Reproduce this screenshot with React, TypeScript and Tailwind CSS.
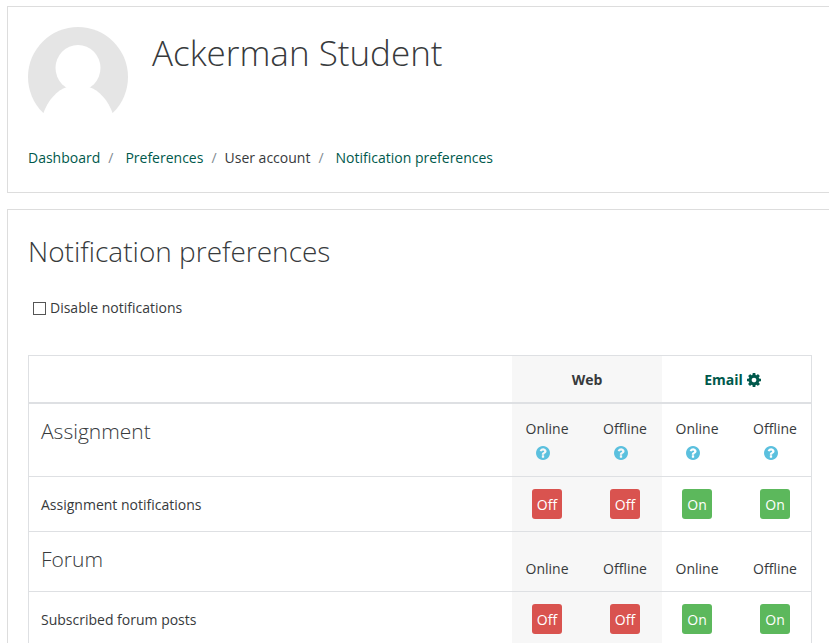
import { useState } from "react";

type Section = { title: string; item: string; help: boolean };

const sections: Section[] = [
  { title: "Assignment", item: "Assignment notifications", help: true },
  { title: "Forum", item: "Subscribed forum posts", help: false },
];

function CogIcon() {
  return (
    <svg viewBox="128 128 1536 1536" className="h-3.5 w-3.5" fill="currentColor" aria-hidden="true">
      <path d="M1152 896q0-106-75-181t-181-75-181 75-75 181 75 181 181 75 181-75 75-181zm512-109v222q0 12-8 23t-20 13l-185 28q-19 54-39 91 35 50 107 138 10 12 10 25t-9 23q-27 37-99 108t-94 71q-12 0-26-9l-138-108q-44 23-91 38-16 136-29 186-7 28-36 28h-222q-14 0-24.500-8.500t-11.500-21.500l-28-184q-49-16-90-37l-141 107q-10 9-25 9-14 0-25-11-126-114-165-168-7-10-7-23 0-12 8-23 15-21 51-66.500t54-70.500q-27-50-41-99l-183-27q-13-2-21-12.500t-8-23.500v-222q0-12 8-23t19-13l186-28q14-46 39-92-40-57-107-138-10-12-10-24 0-10 9-23 26-36 98.500-107.500t94.500-71.500q13 0 26 10l138 107q44-23 91-38 16-136 29-186 7-28 36-28h222q14 0 24.500 8.500t11.500 21.500l28 184q49 16 90 37l142-107q9-9 24-9 13 0 25 10 129 119 165 170 7 8 7 22 0 12-8 23-15 21-51 66.500t-54 70.500q26 50 41 98l183 28q13 2 21 12.500t8 23.500z" />
    </svg>
  );
}

function HelpIcon() {
  return (
    <svg viewBox="128 128 1536 1536" className="h-3.5 w-3.5" fill="currentColor" aria-hidden="true">
      <path d="M1024 1376v-192q0-14-9-23t-23-9h-192q-14 0-23 9t-9 23v192q0 14 9 23t23 9h192q14 0 23-9t9-23zm256-672q0-88-55.500-163t-138.500-116-170-41q-243 0-371 213-15 24 8 42l132 100q7 6 19 6 16 0 25-12 53-68 86-92 34-24 86-24 48 0 85.500 26t37.500 59q0 38-20 61t-68 45q-63 28-115.500 86.500t-52.500 125.500v36q0 14 9 23t23 9h192q14 0 23-9t9-23q0-19 21.500-49.500t54.500-49.500q32-18 49-28.500t46-35 44.500-48 28-60.500 12.500-81zm384 192q0 209-103 385.500t-279.500 279.500-385.500 103-385.500-103-279.500-279.500-103-385.500 103-385.500 279.500-279.500 385.500-103 385.500 103 279.500 279.500 103 385.500z" />
    </svg>
  );
}

function Avatar() {
  return (
    <svg viewBox="0 0 100 100" className="h-[100px] w-[100px] shrink-0" role="img" aria-label="Ackerman Student">
      <circle cx="50" cy="50" r="50" fill="#e5e5e5" />
      <ellipse cx="50" cy="41" rx="22.500" ry="23" fill="#fff" />
      <path d="M15 87C20 73 29 63 39 60H61C71 63 80 73 85 87L88 100H12Z" fill="#fff" />
    </svg>
  );
}

function StateLabels({ help }: { help: boolean }) {
  return (
    <div className="flex gap-[34px] pl-[13px]">
      {["Online", "Offline"].map((name) => (
        <div key={name} className="flex w-11 flex-col items-center">
          <span>{name}</span>
          {help && (
            <button type="button" aria-label={`Help with ${name}`} className="mr-2 flex h-6 items-center text-[#5bc0de]">
              <HelpIcon />
            </button>
          )}
        </div>
      ))}
    </div>
  );
}

function Toggle({ initial, label }: { initial: boolean; label: string }) {
  const [on, setOn] = useState(initial);
  return (
    <div className="flex w-11 justify-center">
      <button
        type="button"
        aria-label={`${label}: ${on ? "On" : "Off"}`}
        aria-pressed={on}
        onClick={() => setOn(!on)}
        className={`flex h-[30px] w-[30px] items-center justify-center rounded-[3px] pt-0.5 text-white ${on ? "bg-[#5cb85c]" : "bg-[#d9534f]"}`}
      >
        {on ? "On" : "Off"}
      </button>
    </div>
  );
}

function TogglePair({ initial, label }: { initial: boolean; label: string }) {
  return (
    <div className="flex gap-[34px] pl-[13px]">
      <Toggle initial={initial} label={`${label} online`} />
      <Toggle initial={initial} label={`${label} offline`} />
    </div>
  );
}

function SectionRows({ title, item, help }: Section) {
  return (
    <>
      <tr className={help ? "h-[73px]" : "h-[60px]"}>
        <th scope="rowgroup" className="border-b border-l border-[#dee0e3] px-3 pt-[11px] text-left align-top text-[21px] leading-8 font-light">
          {title}
        </th>
        <td className={`border-b border-[#dee0e3] bg-[#f7f7f7] align-bottom ${help ? "pb-[11px]" : "pb-[10px]"}`}>
          <StateLabels help={help} />
        </td>
        <td className={`border-r border-b border-[#dee0e3] align-bottom ${help ? "pb-[11px]" : "pb-[10px]"}`}>
          <StateLabels help={help} />
        </td>
      </tr>
      <tr className="h-[55px]">
        <th scope="row" className="border-b border-l border-[#dee0e3] px-3 pt-0.5 text-left font-normal">
          {item}
        </th>
        <td className="border-b border-[#dee0e3] bg-[#f7f7f7]">
          <TogglePair initial={false} label={`${item}, web`} />
        </td>
        <td className="border-r border-b border-[#dee0e3]">
          <TogglePair initial={true} label={`${item}, email`} />
        </td>
      </tr>
    </>
  );
}

export default function App() {
  return (
    <div className="flex h-screen flex-col gap-4 overflow-hidden bg-white pt-1.5 pl-[7px] font-['Open_Sans','Noto_Sans',sans-serif] text-sm leading-6 text-[#373a3c]">
      <header className="shrink-0 border-y border-l border-[#dddddd] px-5 pt-5 pb-[22px]">
        <div className="flex gap-6">
          <Avatar />
          <h1 className="text-[35px] leading-[52px] font-light">Ackerman Student</h1>
        </div>
        <nav aria-label="Breadcrumb" className="mt-[19px]">
          <ol className="flex">
            <li>
              <a href="#dashboard" className="text-[#00594c]">Dashboard</a>
            </li>
            <li>
              <span className="pr-3 pl-2 text-[#818a91]">/</span>
              <a href="#preferences" className="text-[#00594c]">Preferences</a>
            </li>
            <li>
              <span className="px-2 text-[#818a91]">/</span>
              <span>User account</span>
            </li>
            <li>
              <span className="pr-3 pl-2 text-[#818a91]">/</span>
              <a href="#notifications" className="text-[#00594c]">Notification preferences</a>
            </li>
          </ol>
        </nav>
      </header>

      <main className="flex-1 border-t border-l border-[#dddddd] pt-5 pr-[17px] pl-5">
        <h2 className="text-[28px] leading-[42px] font-light">Notification preferences</h2>
        <div className="mt-6 flex items-center pl-[5px]">
          <input
            id="disable-notifications"
            type="checkbox"
            className="mr-1 h-[13px] w-[13px] appearance-none border border-[#555555] bg-white checked:bg-[#00594c]"
          />
          <label htmlFor="disable-notifications">Disable notifications</label>
        </div>

        <table className="mt-[35px] w-full table-fixed border-separate border-spacing-0">
          <colgroup>
            <col />
            <col className="w-[150px]" />
            <col className="w-[150px]" />
          </colgroup>
          <thead>
            <tr className="h-[49px]">
              <td className="border-t border-b-2 border-l border-[#dee0e3]" />
              <th scope="col" className="border-t border-b-2 border-[#dee0e3] bg-[#f7f7f7] pt-0.5 font-bold">
                Web
              </th>
              <th scope="col" className="border-t border-r border-b-2 border-[#dee0e3] pt-0.5 pr-2 font-bold">
                <a href="#email-settings" className="inline-flex items-center gap-1 text-[#00594c]">
                  Email <CogIcon />
                </a>
              </th>
            </tr>
          </thead>
          <tbody>
            {sections.map((section) => (
              <SectionRows key={section.title} {...section} />
            ))}
          </tbody>
        </table>
      </main>
    </div>
  );
}
